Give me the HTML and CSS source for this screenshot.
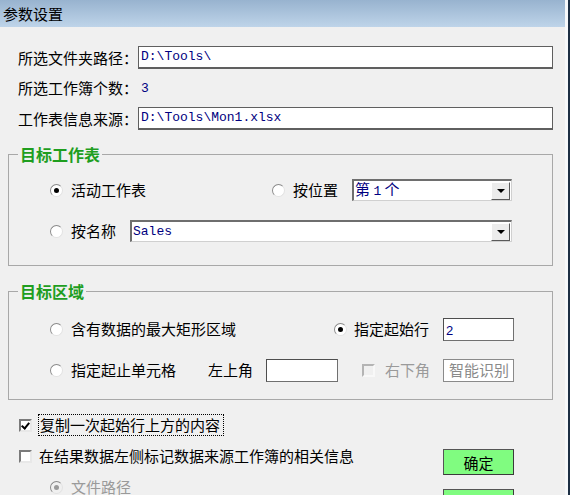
FILE: index.html
```html
<!DOCTYPE html>
<html>
	<head>
	<meta charset="utf-8">
	<link rel="stylesheet" href="styles.css">
	</head>

	<body>
		<div class="window">
			<div class="titlebar">参数设置</div>

			<div class="content">

				<div class="source">
					<div class="field">
						<span class="label">所选文件夹路径：</span>
						<div class="textbox mono">D:\Tools\</div>
					</div>
					<div class="field field-count">
						<span class="label">所选工作簿个数：</span>
						<span class="value mono">3</span>
					</div>
					<div class="field">
						<span class="label">工作表信息来源：</span>
						<div class="textbox mono">D:\Tools\Mon1.xlsx</div>
					</div>
				</div>

				<!-- target sheet -->
				<fieldset class="group group-sheet">
					<legend>目标工作表</legend>
					<div class="row">
						<label class="opt opt-active"><span class="radio checked"></span>活动工作表</label>
						<label class="opt"><span class="radio"></span>按位置</label>
						<div class="combo combo-pos">
							<span class="combo-text">第&nbsp;<span class="mono">1</span>&nbsp;个</span>
							<span class="combo-btn"><i class="arrow"></i></span>
						</div>
					</div>
					<div class="row">
						<label class="opt"><span class="radio"></span>按名称</label>
						<div class="combo combo-name">
							<span class="combo-text mono">Sales</span>
							<span class="combo-btn"><i class="arrow"></i></span>
						</div>
					</div>
				</fieldset>

				<!-- target range -->
				<fieldset class="group group-range">
					<legend>目标区域</legend>
					<div class="row">
						<label class="opt opt-max"><span class="radio"></span>含有数据的最大矩形区域</label>
						<label class="opt opt-start"><span class="radio checked"></span>指定起始行</label>
						<div class="smallbox push"><span class="num">2</span></div>
					</div>
					<div class="row">
						<label class="opt opt-cells"><span class="radio"></span>指定起止单元格</label>
						<span class="plain">左上角</span>
						<div class="smallbox cellbox"></div>
						<label class="opt opt-br disabled"><span class="check"></span>右下角</label>
						<div class="smallbox smartbox push">智能识别</div>
					</div>
				</fieldset>

				<div class="bottom">
					<div class="flags">
						<label class="opt flag"><span class="check checked"></span><span class="focus">复制一次起始行上方的内容</span></label>
						<label class="opt flag"><span class="check"></span>在结果数据左侧标记数据来源工作簿的相关信息</label>
						<label class="opt flag sub disabled"><span class="radio checked"></span>文件路径</label>
					</div>
					<div class="actions">
						<button class="btn">确定</button>
						<button class="btn"></button>
					</div>
				</div>

			</div>
		</div>
	</body>
</html>
```

FILE: styles.css
```css
body, html {
	margin: 0;
	padding: 0;
}

body {
	background: #f0f0f0;
	font-family: "Noto Sans CJK SC", "Liberation Sans", sans-serif;
	font-size: 15px;
	color: #000;
}

.window {
	width: 565px;
	height: 495px;
	overflow: hidden;
	padding-right: 3px;
	border-right: 2px solid #1d2f44;
	background: #f7f9fb;
}

.titlebar {
	height: 27px;
	line-height: 27px;
	padding-left: 3px;
	background: linear-gradient(#98b3cf, #bed4e9);
	font-size: 15px;
}

.content {
	height: 468px;
	padding: 19px 12px 0 8px;
	background: #f0f0f0;
	box-sizing: border-box;
}

.mono {
	font-family: "Liberation Mono", monospace;
	font-size: 13px;
	color: #000080;
}

/* source info */
.source {
	padding-left: 10px;
	display: flex;
	flex-direction: column;
	gap: 7px;
}

.field {
	display: flex;
	align-items: center;
	height: 23px;
}

.field-count {
	height: 24px;
}

.label {
	width: 120px;
	line-height: 20px;
}

.value {
	margin-left: 3px;
}

.textbox {
	flex: 1;
	height: 23px;
	box-sizing: border-box;
	border: 1px solid #5f5f5f;
	border-bottom-width: 2px;
	background: #fff;
	padding-left: 2px;
	line-height: 20px;
}

/* groups */
.group {
	margin: 14px 0 0 0;
	padding: 0 40px 23px 0;
	border: 1px solid #a8a8a8;
	min-width: 0;
}

.group legend {
	margin-left: 9px;
	padding: 0 2px;
	font-size: 16px;
	font-weight: bold;
	line-height: 20px;
	color: #1f9e1f;
}

.group-sheet .row:first-of-type {
	margin-top: 15px;
}

.group-range {
	margin-top: 15px;
	padding-right: 38px;
	padding-bottom: 18px;
}

.group-range .row:first-of-type {
	margin-top: 17px;
}

.row {
	display: flex;
	align-items: center;
	height: 22px;
	padding-left: 41px;
}

.row + .row {
	margin-top: 19px;
}

.opt {
	display: flex;
	align-items: center;
	line-height: 20px;
	white-space: nowrap;
}

.opt-active { width: 222px; }
.opt-max { width: 284px; }
.opt-cells { width: 158px; }

.opt-start .radio { margin-right: 7px; }

.disabled {
	color: #9a9a9a;
}

.radio {
	width: 13px;
	height: 13px;
	box-sizing: border-box;
	margin-right: 8px;
	border-radius: 50%;
	border: 1px solid;
	border-color: #8a8a8a #e2e2e2 #e2e2e2 #8a8a8a;
	background: #fff;
	display: flex;
	align-items: center;
	justify-content: center;
}

.radio.checked::after {
	content: "";
	width: 5px;
	height: 5px;
	border-radius: 50%;
	background: #000;
}

.disabled .radio {
	background: #f0f0f0;
}

.disabled .radio.checked::after {
	background: #9a9a9a;
}

.check {
	width: 13px;
	height: 13px;
	box-sizing: border-box;
	margin-right: 8px;
	border: 2px solid;
	border-color: #7a7a7a #e8e8e8 #e8e8e8 #7a7a7a;
	background: #fff;
	position: relative;
}

.check.checked::after {
	content: "";
	position: absolute;
	left: 2px;
	top: 0;
	width: 3px;
	height: 6px;
	border: solid #000;
	border-width: 0 2px 2px 0;
	transform: rotate(40deg);
}

.disabled .check {
	background: #f0f0f0;
	border-color: #b4b4b4 #f8f8f8 #f8f8f8 #b4b4b4;
}

/* combo boxes */
.combo {
	flex: 1;
	height: 22px;
	box-sizing: border-box;
	display: flex;
	align-items: center;
	background: #fff;
	border-top: 2px solid #6e6e6e;
	border-left: 2px solid #6e6e6e;
	border-bottom: 1px solid #d0d0d0;
	border-right: 1px solid #d0d0d0;
}

.combo-pos { margin-left: 14px; }
.combo-name { margin-left: 14px; }

.combo-text {
	flex: 1;
	padding-left: 1px;
	color: #000080;
	line-height: 18px;
}

.combo-btn {
	width: 19px;
	height: 18px;
	box-sizing: border-box;
	margin-right: 1px;
	background: #ececec;
	border: 1px solid;
	border-color: #fff #5a5a5a #5a5a5a #fff;
	display: flex;
	align-items: center;
	justify-content: center;
}

.arrow {
	width: 0;
	height: 0;
	border-left: 4px solid transparent;
	border-right: 4px solid transparent;
	border-top: 4px solid #000;
}

/* small boxes */
.smallbox {
	width: 71px;
	height: 23px;
	box-sizing: border-box;
	background: #fff;
	border: 1px solid #707070;
	border-top-color: #4e4e4e;
	border-left-color: #4e4e4e;
	line-height: 20px;
}

.push {
	margin-left: auto;
}

.num {
	padding-left: 2px;
	font-family: "Liberation Sans", sans-serif;
	font-size: 13px;
	color: #000080;
}

.plain {
	line-height: 20px;
}

.cellbox {
	width: 72px;
	margin-left: 13px;
}

.opt-br {
	margin-left: 24px;
}

.opt-br .check {
	margin-right: 10px;
}

.smartbox {
	border-color: #8a8a8a;
	color: #8a8a8a;
	text-align: center;
	padding-left: 1px;
}

/* bottom */
.bottom {
	display: grid;
	grid-template-columns: 1fr 71px;
	padding: 0 39px 0 10px;
}

.flags {
	padding-top: 15px;
	display: flex;
	flex-direction: column;
	gap: 11px;
}

.flag {
	height: 20px;
}

.flag .check {
	margin-right: 7px;
	margin-left: 1px;
}

.focus {
	outline: 1px dotted #000;
	outline-offset: 0;
	padding: 0 3px 0 1px;
}

.sub {
	margin-left: 32px;
}

.actions {
	padding-top: 49px;
	display: flex;
	flex-direction: column;
	gap: 14px;
}

.btn {
	width: 71px;
	height: 26px;
	margin: 0;
	padding: 0;
	font-family: "Noto Sans CJK SC", sans-serif;
	font-size: 15px;
	color: #000;
	background: #80fc80;
	border: 1px solid #555;
	border-right-color: #3a3a3a;
	border-bottom-color: #3a3a3a;
}
```
